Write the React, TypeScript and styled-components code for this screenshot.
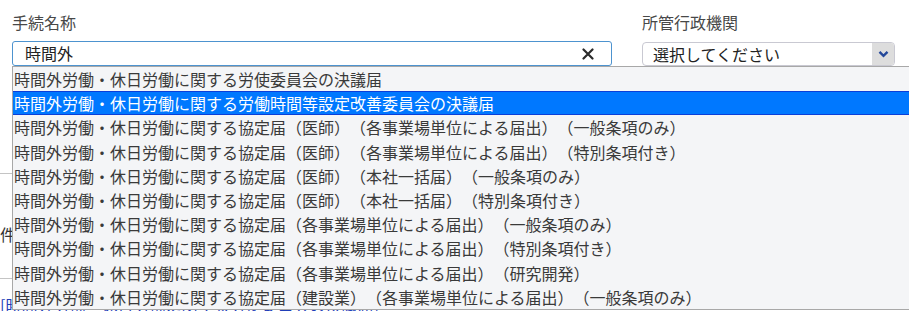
import styled, { createGlobalStyle } from "styled-components";

const items = [
  "時間外労働・休日労働に関する労使委員会の決議届",
  "時間外労働・休日労働に関する労働時間等設定改善委員会の決議届",
  "時間外労働・休日労働に関する協定届（医師）（各事業場単位による届出）（一般条項のみ）",
  "時間外労働・休日労働に関する協定届（医師）（各事業場単位による届出）（特別条項付き）",
  "時間外労働・休日労働に関する協定届（医師）（本社一括届）（一般条項のみ）",
  "時間外労働・休日労働に関する協定届（医師）（本社一括届）（特別条項付き）",
  "時間外労働・休日労働に関する協定届（各事業場単位による届出）（一般条項のみ）",
  "時間外労働・休日労働に関する協定届（各事業場単位による届出）（特別条項付き）",
  "時間外労働・休日労働に関する協定届（各事業場単位による届出）（研究開発）",
  "時間外労働・休日労働に関する協定届（建設業）（各事業場単位による届出）（一般条項のみ）",
];

export default function App() {
  return (
    <Page>
      <GlobalStyle />
      <Form>
        <Field $width={600}>
          <Label>手続名称</Label>
          <InputBox>
            <InputText>時間外</InputText>
            <ClearButton aria-label="clear">
              <svg width="12" height="12" viewBox="0 0 12 12">
                <path d="M1.5 1.5 L10.5 10.5 M10.5 1.5 L1.5 10.5" stroke="#2b2b2b" strokeWidth="2.2" strokeLinecap="round" />
              </svg>
            </ClearButton>
          </InputBox>
        </Field>
        <Field $width={253}>
          <Label>所管行政機関</Label>
          <SelectBox>
            <SelectText>選択してください</SelectText>
            <ArrowBox>
              <svg width="11" height="8" viewBox="0 0 11 8">
                <path d="M1.5 1.8 L5.5 5.8 L9.5 1.8" stroke="#24489a" strokeWidth="2.4" fill="none" />
              </svg>
            </ArrowBox>
          </SelectBox>
        </Field>
      </Form>
      <Results>
        <ResultRow>件</ResultRow>
        <LinkRow>[時間外労働・休日労働に関する労使委員会の決議届]</LinkRow>
      </Results>
      <Suggestions>
        {items.map((item, i) => (
          <Option key={item} $active={i === 1}>
            {item}
          </Option>
        ))}
      </Suggestions>
    </Page>
  );
}

const GlobalStyle = createGlobalStyle`
  html, body {
    margin: 0;
    background: #ffffff;
    overflow: hidden;
  }
  body {
    font-family: "Noto Sans CJK JP", "Noto Sans", sans-serif;
    color: #333;
    text-spacing-trim: space-all;
  }
`;

const Page = styled.div`
  position: relative;
  width: 909px;
  height: 311px;
  overflow: hidden;
`;

const Form = styled.div`
  display: flex;
  gap: 30px;
  padding: 10px 12px 0;
`;

const Field = styled.div<{ $width: number }>`
  display: flex;
  flex-direction: column;
  width: ${(p) => p.$width}px;
`;

const Label = styled.div`
  font-size: 16px;
  line-height: 24px;
  color: #484848;
  margin-bottom: 7px;
`;

const InputBox = styled.div`
  display: flex;
  align-items: center;
  box-sizing: border-box;
  height: 25px;
  border: 1px solid #4d93cf;
  border-radius: 3px;
  padding: 0 12px 0 12px;
`;

const InputText = styled.span`
  flex: 1;
  font-size: 16px;
  line-height: 23px;
  color: #222;
`;

const ClearButton = styled.span`
  display: flex;
  align-items: center;
  margin-right: 5px;
`;

const SelectBox = styled.div`
  display: flex;
  align-items: stretch;
  box-sizing: border-box;
  height: 24px;
  margin-top: 1px;
  border: 1px solid #c9c9d2;
  border-radius: 4px;
  overflow: hidden;
`;

const SelectText = styled.span`
  flex: 1;
  padding-left: 10px;
  font-size: 16px;
  line-height: 22px;
  color: #222;
`;

const ArrowBox = styled.span`
  width: 22px;
  display: flex;
  align-items: center;
  justify-content: center;
  background: #dddddd;
`;

const Results = styled.div`
  margin-top: 107px;
  border-top: 1px solid #c4c4c4;
`;

const ResultRow = styled.div`
  height: 105px;
  border-bottom: 1px solid #c4c4c4;
  font-size: 16px;
  line-height: 24px;
  padding-top: 48px;
  box-sizing: border-box;
  color: #333;
`;

const LinkRow = styled.div`
  padding-top: 14px;
  font-size: 16px;
  line-height: 24px;
  color: #1f3fb8;
  white-space: nowrap;
`;

const Suggestions = styled.ul`
  position: absolute;
  top: 66px;
  left: 12px;
  width: 920px;
  margin: 0;
  padding: 0;
  list-style: none;
  background: #f4f5f7;
  border: 1px solid #a8a8a8;
`;

const Option = styled.li<{ $active: boolean }>`
  height: 24.2px;
  line-height: 24px;
  font-size: 16px;
  padding-left: 1px;
  white-space: nowrap;
  color: ${(p) => (p.$active ? "#ffffff" : "#3a3a3a")};
  background: ${(p) => (p.$active ? "#0078ff" : "transparent")};
  box-shadow: ${(p) => (p.$active ? "inset 0 1px #0b3fd8, inset 0 -1px #0b3fd8" : "none")};
`;
